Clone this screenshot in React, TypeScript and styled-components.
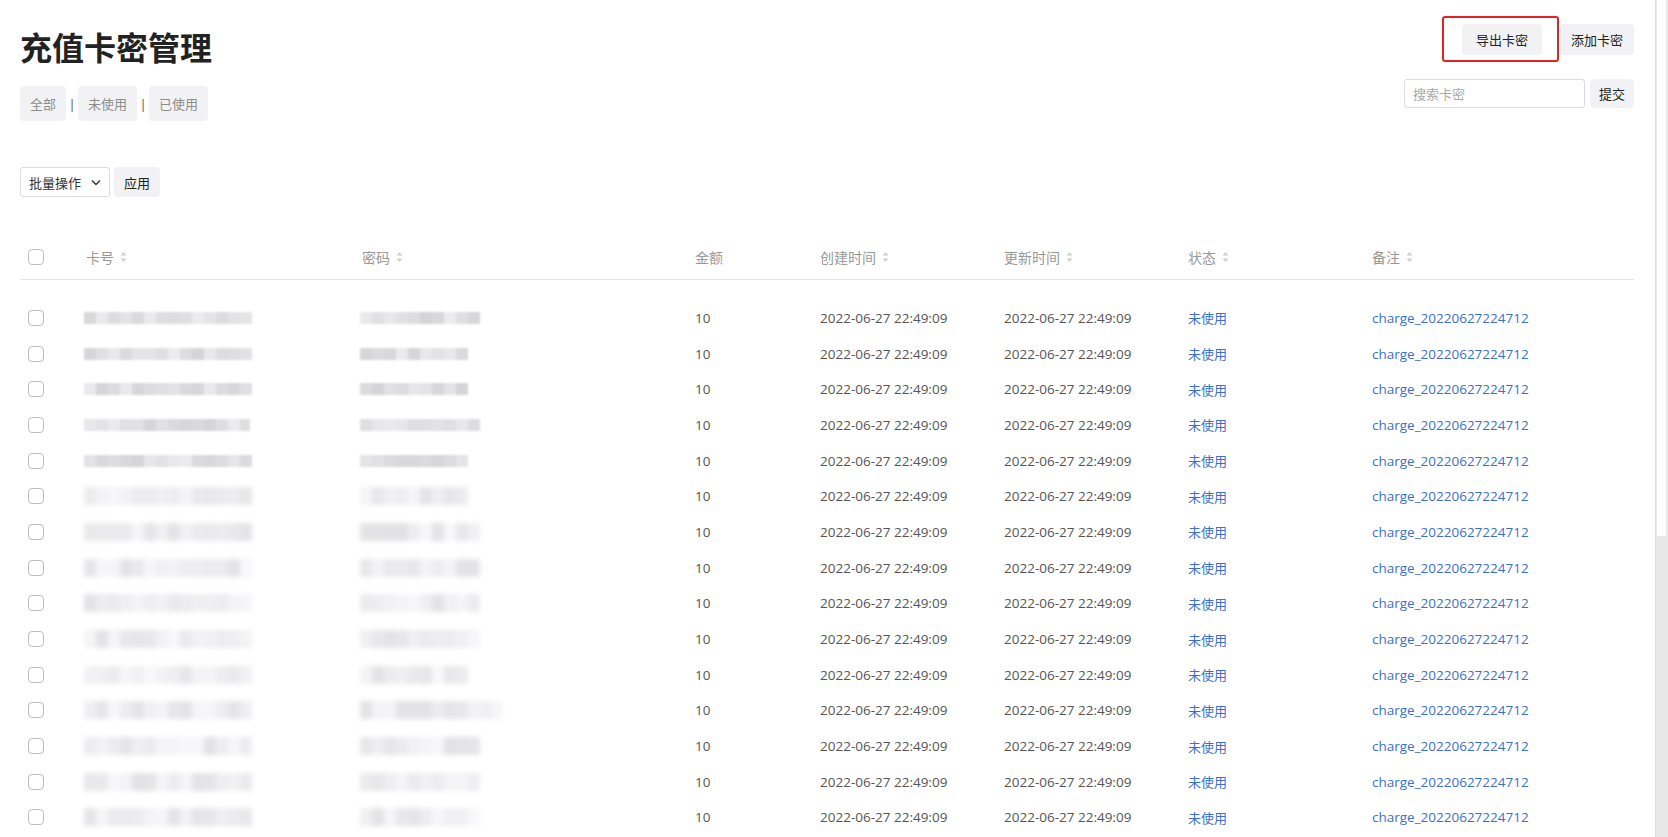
import React from 'react';
import styled, { createGlobalStyle } from 'styled-components';

const GlobalStyle = createGlobalStyle`
  html, body {
    margin: 0;
    padding: 0;
    height: 100%;
    overflow: hidden;
    background: #fff;
  }
  body {
    font-family: 'Open Sans', 'Noto Sans CJK SC', sans-serif;
    color: #333;
  }
  * {
    box-sizing: border-box;
  }
`;

const Page = styled.div`
  display: flex;
  height: 100vh;
`;

const Main = styled.main`
  flex: 1;
  min-width: 0;
  padding: 0 21px 0 20px;
  overflow: hidden;
`;

const ScrollTrack = styled.div`
  width: 13px;
  flex-shrink: 0;
  background: #e8e8e8;
  border-left: 1px solid #dcdcdc;
  padding: 0 2px 0 1px;
`;

const ScrollThumb = styled.div`
  height: 536px;
  background: #fff;
`;

const TopBar = styled.header`
  display: flex;
  justify-content: space-between;
  align-items: flex-start;
`;

const Title = styled.h1`
  margin: 27px 0 0;
  font-size: 32px;
  line-height: 42px;
  font-weight: 700;
  color: #222;
`;

const Tabs = styled.div`
  display: flex;
  align-items: center;
  margin-top: 17px;
`;

const Tab = styled.button`
  height: 35px;
  padding: 0 10px;
  border: 0;
  border-radius: 4px;
  background: #f2f2f4;
  color: #8c8c8c;
  font-family: inherit;
  font-size: 13px;
  cursor: pointer;
`;

const Divider = styled.span`
  width: 12px;
  text-align: center;
  color: #555;
  font-size: 13px;
`;

const Actions = styled.div`
  display: flex;
  flex-direction: column;
  align-items: flex-end;
`;

const ButtonRow = styled.div`
  display: flex;
  gap: 18px;
  margin-top: 24px;
`;

const Highlight = styled.div`
  position: relative;
  display: flex;
`;

const RedFrame = styled.span`
  position: absolute;
  left: -20px;
  top: -8px;
  right: -17px;
  bottom: -7px;
  border: 2px solid #e3231f;
  border-radius: 3px;
  pointer-events: none;
`;

const GrayButton = styled.button<{ $pad?: number; $h?: number }>`
  height: ${(p) => p.$h ?? 31}px;
  padding: 0 ${(p) => p.$pad ?? 14}px;
  border: 0;
  border-radius: 4px;
  background: #f2f2f4;
  color: #222;
  font-family: inherit;
  font-size: 13px;
  cursor: pointer;
`;

const SearchRow = styled.div`
  display: flex;
  gap: 5px;
  margin-top: 24px;
`;

const SearchInput = styled.input`
  width: 181px;
  height: 29px;
  padding: 0 8px;
  border: 1px solid #dcdcdc;
  border-radius: 3px;
  font-family: inherit;
  font-size: 13px;
  color: #333;
  outline: none;
  &::placeholder {
    color: #a8a8a8;
  }
`;

const BatchRow = styled.div`
  display: flex;
  gap: 4px;
  margin-top: 46px;
`;

const Select = styled.div`
  width: 90px;
  height: 30px;
  padding: 0 8px;
  display: flex;
  align-items: center;
  justify-content: space-between;
  border: 1px solid #dcdcdc;
  border-radius: 3px;
  font-size: 13px;
  color: #333;
`;

const Table = styled.table`
  width: 100%;
  margin-top: 39px;
  border-collapse: collapse;
  table-layout: fixed;
`;

const Th = styled.th<{ $first?: boolean }>`
  height: 43px;
  padding: 0 0 0 ${(p) => (p.$first ? 8 : 2)}px;
  text-align: left;
  vertical-align: middle;
  font-size: 14px;
  font-weight: 400;
  color: #999;
  border-bottom: 1px solid #e6e6e6;
`;

const HeaderLabel = styled.span`
  display: inline-flex;
  align-items: center;
  gap: 6px;
`;

const SpacerRow = styled.tr`
  height: 21px;
`;

const Td = styled.td<{ $first?: boolean }>`
  height: 35.7px;
  padding: 0 0 0 ${(p) => (p.$first ? 8 : 2)}px;
  vertical-align: middle;
  font-size: 13.5px;
  color: #555;
  white-space: nowrap;
`;

const Link = styled.span<{ $cjk?: boolean }>`
  color: #3b6fcf;
  font-size: ${(p) => (p.$cjk ? 13 : 13.5)}px;
`;

const Box = styled.span`
  display: block;
  width: 16px;
  height: 16px;
  border: 1px solid #bdbdbd;
  border-radius: 4px;
  background: #fff;
`;

const Blur = styled.div<{ $w: number; $h: number; $blur: number; $bg: string }>`
  width: ${(p) => p.$w}px;
  height: ${(p) => p.$h}px;
  margin-left: -2px;
  background: ${(p) => p.$bg};
  filter: blur(${(p) => p.$blur}px);
`;

const SortIcon = () => (
  <svg width="7" height="12" viewBox="0 0 7 12">
    <path d="M3.5 1 L6.5 4.5 L0.5 4.5 Z" fill="#d0d0d0" />
    <path d="M3.5 11 L6.5 7.5 L0.5 7.5 Z" fill="#d0d0d0" />
  </svg>
);

const Chevron = () => (
  <svg width="10" height="7" viewBox="0 0 10 7">
    <path d="M1 1.5 L5 5.5 L9 1.5" fill="none" stroke="#333" strokeWidth="1.4" />
  </svg>
);

function pattern(seed: number, light: boolean): string {
  let s = seed * 9301 + 49297;
  const stops: string[] = [];
  for (let i = 0; i < 20; i++) {
    s = (s * 9301 + 49297) % 233280;
    const r = s / 233280;
    const base = light ? 226 : 212;
    const v = Math.round(base + r * (light ? 22 : 24));
    stops.push(`rgb(${v},${v},${v + 2}) ${i * 12}px ${(i + 1) * 12}px`);
  }
  return `linear-gradient(90deg, ${stops.join(', ')})`;
}

const passWidths = [120, 108, 108, 120, 108, 108, 120, 120, 120, 120, 108, 143, 120, 120, 120];
const cardWidths = [168, 168, 168, 166, 168, 168, 168, 168, 168, 168, 168, 168, 168, 168, 168];

const columns = [
  { label: '卡号', sort: true, width: 276 },
  { label: '密码', sort: true, width: 333 },
  { label: '金额', sort: false, width: 125 },
  { label: '创建时间', sort: true, width: 184 },
  { label: '更新时间', sort: true, width: 184 },
  { label: '状态', sort: true, width: 184 },
  { label: '备注', sort: true, width: 264 },
];

export default function App() {
  const rows = passWidths.map((pw, i) => ({
    card: cardWidths[i],
    pass: pw,
    light: i >= 5,
  }));

  return (
    <Page>
      <GlobalStyle />
      <Main>
        <TopBar>
          <div>
            <Title>充值卡密管理</Title>
            <Tabs>
              <Tab>全部</Tab>
              <Divider>|</Divider>
              <Tab>未使用</Tab>
              <Divider>|</Divider>
              <Tab>已使用</Tab>
            </Tabs>
          </div>
          <Actions>
            <ButtonRow>
              <Highlight>
                <GrayButton $pad={14}>导出卡密</GrayButton>
                <RedFrame />
              </Highlight>
              <GrayButton $pad={11}>添加卡密</GrayButton>
            </ButtonRow>
            <SearchRow>
              <SearchInput placeholder="搜索卡密" />
              <GrayButton $pad={9} $h={29}>提交</GrayButton>
            </SearchRow>
          </Actions>
        </TopBar>

        <BatchRow>
          <Select>
            批量操作
            <Chevron />
          </Select>
          <GrayButton $pad={10} $h={30}>应用</GrayButton>
        </BatchRow>

        <Table>
          <colgroup>
            <col style={{ width: 64 }} />
            {columns.map((c) => (
              <col key={c.label} style={{ width: c.width }} />
            ))}
          </colgroup>
          <thead>
            <tr>
              <Th $first>
                <Box />
              </Th>
              {columns.map((c) => (
                <Th key={c.label}>
                  <HeaderLabel>
                    {c.label}
                    {c.sort && <SortIcon />}
                  </HeaderLabel>
                </Th>
              ))}
            </tr>
          </thead>
          <tbody>
            <SpacerRow>
              <td colSpan={8} />
            </SpacerRow>
            {rows.map((r, i) => (
              <tr key={i}>
                <Td $first>
                  <Box />
                </Td>
                <Td>
                  <Blur
                    $w={r.card}
                    $h={r.light ? 18 : 12}
                    $blur={r.light ? 2.5 : 0.8}
                    $bg={pattern(i * 7 + 3, r.light)}
                  />
                </Td>
                <Td>
                  <Blur
                    $w={r.pass}
                    $h={r.light ? 18 : 12}
                    $blur={r.light ? 2.5 : 0.8}
                    $bg={pattern(i * 11 + 5, r.light)}
                  />
                </Td>
                <Td>10</Td>
                <Td>2022-06-27 22:49:09</Td>
                <Td>2022-06-27 22:49:09</Td>
                <Td>
                  <Link $cjk>未使用</Link>
                </Td>
                <Td>
                  <Link>charge_20220627224712</Link>
                </Td>
              </tr>
            ))}
          </tbody>
        </Table>
      </Main>
      <ScrollTrack>
        <ScrollThumb />
      </ScrollTrack>
    </Page>
  );
}
